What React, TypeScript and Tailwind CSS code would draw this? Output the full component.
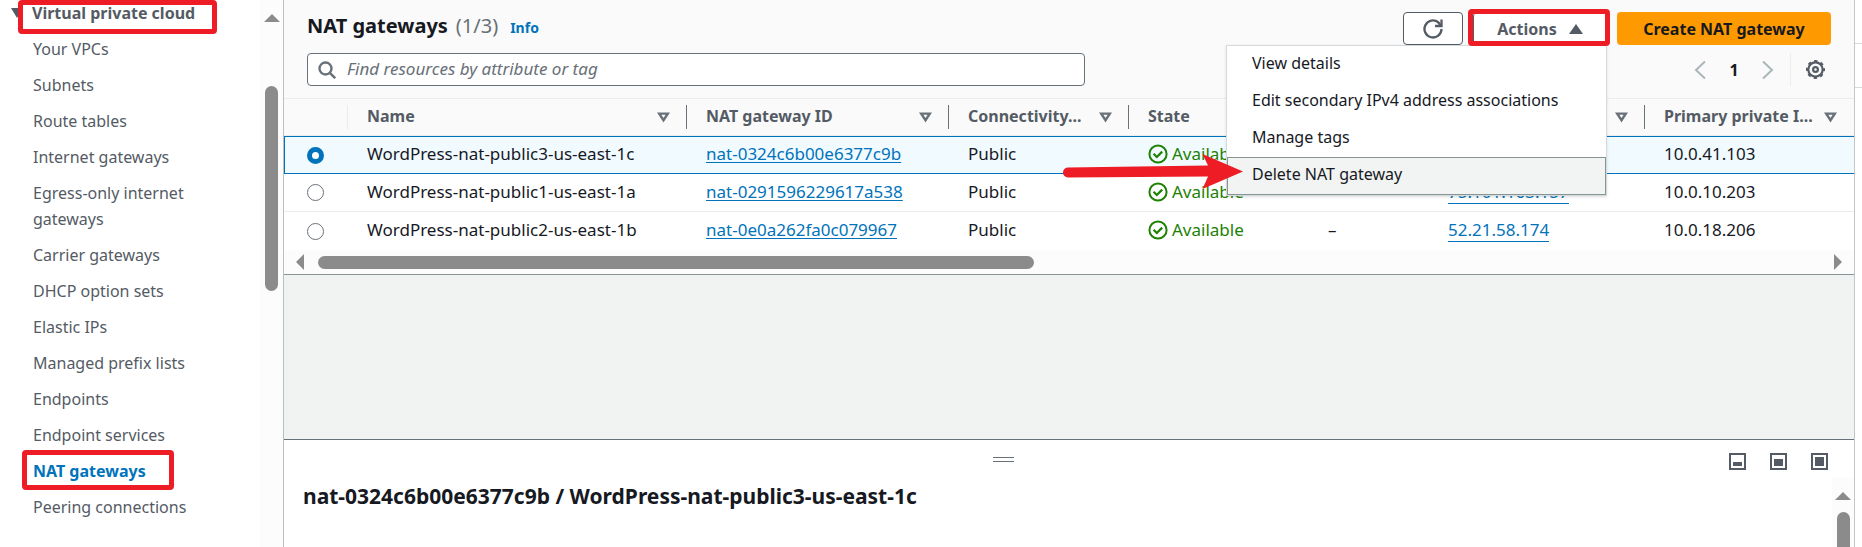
import type { ReactNode } from "react";

const navItems = [
  "Your VPCs",
  "Subnets",
  "Route tables",
  "Internet gateways",
  "Egress-only internet gateways",
  "Carrier gateways",
  "DHCP option sets",
  "Elastic IPs",
  "Managed prefix lists",
  "Endpoints",
  "Endpoint services",
  "NAT gateways",
  "Peering connections",
];

const gateways = [
  { name: "WordPress-nat-public3-us-east-1c", id: "nat-0324c6b00e6377c9b", publicIp: "", privateIp: "10.0.41.103" },
  { name: "WordPress-nat-public1-us-east-1a", id: "nat-0291596229617a538", publicIp: "75.101.163.157", privateIp: "10.0.10.203" },
  { name: "WordPress-nat-public2-us-east-1b", id: "nat-0e0a262fa0c079967", publicIp: "52.21.58.174", privateIp: "10.0.18.206" },
];

const menuItems = ["View details", "Edit secondary IPv4 address associations", "Manage tags", "Delete NAT gateway"];

function SortIcon() {
  return (
    <svg className="h-3 w-[13px] shrink-0" viewBox="0 0 13 12" fill="none" stroke="#687078" strokeWidth="2.4">
      <path d="M2.200 2.600h8.600L6.500 9.200z" />
    </svg>
  );
}

function HeaderCell({ children, sort = true, line = "border-[#687078]" }: { children?: ReactNode; sort?: boolean; line?: string }) {
  return (
    <th className="border-b border-[#eaeded] p-0 text-left font-bold text-[#545b64]">
      <div className={`flex h-6 items-center justify-between border-r pl-[19px] pr-4 ${line}`}>
        <span className="whitespace-nowrap pb-0.5">{children}</span>
        {sort && <SortIcon />}
      </div>
    </th>
  );
}

function StatusIcon() {
  return (
    <svg className="size-5 shrink-0" viewBox="0 0 20 20" fill="none" stroke="#1d8102" strokeWidth="2">
      <circle cx="10" cy="10" r="8.6" />
      <path d="M5.6 9.800l3.200 3.200 5.400-5.400" strokeWidth="2.200" />
    </svg>
  );
}

function UpTriangle() {
  return (
    <svg className="h-2 w-4" viewBox="0 0 16 8" fill="#8b8b8b">
      <path d="M8 0l8 8H0z" />
    </svg>
  );
}

function PanelIcon({ y, h }: { y: number; h: number }) {
  return (
    <svg className="size-[17px]" viewBox="0 0 17 17" fill="#545b64">
      <rect x="1" y="1" width="15" height="15" fill="none" stroke="#545b64" strokeWidth="2" />
      <rect x="4" y={y} width="9" height={h} />
    </svg>
  );
}

function Sidebar() {
  return (
    <aside className="flex w-[284px] shrink-0 border-r border-[#b9c0c0] bg-white">
      <nav className="relative flex-1 text-[16px] leading-[26px] text-[#545b64]">
        <svg className="absolute left-[11px] top-2 h-2.5 w-3" viewBox="0 0 12 10" fill="#545b64">
          <path d="M0 0h12L6 10z" />
        </svg>
        <a href="#vpc" className="block h-9 pl-8 font-bold">
          Virtual private cloud
        </a>
        <div className="absolute left-[18px] top-0 h-[34px] w-[199px] rounded-sm border-[5px] border-[#ee1c25]" />
        <ul className="flex flex-col gap-2.5 pl-[33px]">
          {navItems.map((item) => (
            <li key={item} className="relative max-w-[180px]">
              {item === "NAT gateways" ? (
                <>
                  <a href="#nat" className="font-bold text-[#0073bb]">
                    {item}
                  </a>
                  <div className="absolute -left-[11px] -top-2 h-10 w-[152px] rounded-sm border-[5px] border-[#ee1c25]" />
                </>
              ) : (
                <a href="#nav">{item}</a>
              )}
            </li>
          ))}
        </ul>
      </nav>
      <div className="flex w-[23px] flex-col items-center bg-[#fcfcfc] pt-3.5">
        <UpTriangle />
        <div className="mt-16 h-[205px] w-[13px] rounded-full bg-[#8b8b8b]" />
      </div>
    </aside>
  );
}

function Toolbar() {
  return (
    <header className="flex flex-col gap-2 border-b border-[#eaeded] bg-[#fafafa] pb-3 pl-[23px] pr-[23px] pt-3">
      <div className="flex h-[33px] items-center justify-between">
        <h1 className="flex items-baseline pb-1 text-[20px] font-bold leading-7 text-[#16191f]">
          NAT gateways
          <span className="ml-2 font-normal text-[#687078]">(1/3)</span>
          <a href="#info" className="ml-3 text-[14px] text-[#0073bb]">
            Info
          </a>
        </h1>
        <div className="flex h-full gap-2.5">
          <button aria-label="Refresh" className="flex w-[60px] items-center justify-center rounded-sm border border-[#545b64] bg-white">
            <svg className="size-5" viewBox="0 0 20 20" fill="none" stroke="#545b64" strokeWidth="2.3">
              <path d="M18.500 10A8.500 8.500 0 1 1 15.500 3.500L18 7" />
              <path d="M18.500 0.500V7H12" />
            </svg>
          </button>
          <div className="relative flex w-[134px]">
            <button className="flex w-full items-center justify-center gap-3 rounded-sm border border-[#545b64] bg-white text-[16px] font-bold text-[#545b64]">
              Actions
              <svg className="h-2.5 w-3.5" viewBox="0 0 14 10" fill="#545b64">
                <path d="M7 0l7 10H0z" />
              </svg>
            </button>
            <div className="absolute -left-[5px] -top-[3px] z-30 h-[37px] w-[142px] rounded-sm border-[5px] border-[#ee1c25]" />
            <div className="absolute right-0 top-[33px] z-20 w-[381px] border border-[#d5dbdb] bg-white text-[16px] text-[#16191f] shadow-sm">
              {menuItems.map((item) =>
                item === "Delete NAT gateway" ? (
                  <button key={item} className="block h-[38px] w-full border border-[#879596] bg-[#f2f3f3] pb-1 pl-6 text-left">
                    {item}
                  </button>
                ) : (
                  <button key={item} className="block h-[37px] w-full pb-1 pl-[25px] text-left">
                    {item}
                  </button>
                )
              )}
              <svg className="absolute -left-[165px] top-[107px] h-[37px] w-[182px]" viewBox="0 0 182 37" fill="#ee1c25">
                <path d="M6 14.500L146 12.500 140.500 1 181 18.500 140.500 36 146 23.500 6 24.500a5 5 0 0 1 0-10z" />
              </svg>
            </div>
          </div>
          <button className="w-[214px] rounded-sm bg-[#ff9900] text-[16px] font-bold text-[#16191f]">Create NAT gateway</button>
        </div>
      </div>
      <div className="flex h-[33px] items-center justify-between">
        <label className="flex h-full w-[778px] items-center gap-[11px] rounded-sm border border-[#687078] bg-white pl-2.5">
          <svg className="size-[18px]" viewBox="0 0 18 18" fill="none" stroke="#687078" strokeWidth="2.4">
            <circle cx="7.500" cy="7.500" r="6" />
            <path d="M11.800 11.800l5.400 5.400" />
          </svg>
          <input
            aria-label="Find resources"
            placeholder="Find resources by attribute or tag"
            className="h-full flex-1 bg-transparent pb-0.5 text-[17px] italic outline-none placeholder:text-[#687078]"
          />
        </label>
        <div className="flex h-full items-center">
          <button aria-label="Previous page">
            <svg className="h-5 w-3" viewBox="0 0 12 20" fill="none" stroke="#aab7b8" strokeWidth="2">
              <path d="M11 1.500L2 10l9 8.500" />
            </svg>
          </button>
          <button className="w-14 text-center text-[16px] font-bold text-[#16191f]">1</button>
          <button aria-label="Next page">
            <svg className="h-5 w-3" viewBox="0 0 12 20" fill="none" stroke="#aab7b8" strokeWidth="2">
              <path d="M1 1.500l9 8.500-9 8.500" />
            </svg>
          </button>
          <div className="ml-4 h-full border-l border-[#eaeded]" />
          <button aria-label="Preferences" className="ml-[15px] mr-1.5">
            <svg className="size-[19px]" viewBox="0 0 19 19" fill="none" stroke="#545b64">
              <circle cx="9.500" cy="9.500" r="7.200" strokeWidth="2.200" />
              <circle cx="9.500" cy="9.500" r="8.500" strokeWidth="2" strokeDasharray="3.340 3.340" strokeDashoffset="1.670" />
              <circle cx="9.500" cy="9.500" r="2.400" strokeWidth="2.200" />
            </svg>
          </button>
        </div>
      </div>
    </header>
  );
}

function GatewayTable() {
  return (
    <table className="w-full table-fixed border-separate border-spacing-0 text-[#16191f]">
      <colgroup>
        <col className="w-16" />
        <col className="w-[339px]" />
        <col className="w-[262px]" />
        <col className="w-[180px]" />
        <col className="w-[180px]" />
        <col className="w-[120px]" />
        <col className="w-[216px]" />
        <col />
      </colgroup>
      <thead className="text-[16px]">
        <tr className="h-[37px] bg-[#fafafa]">
          <HeaderCell sort={false} line="border-[#eaeded]" />
          <HeaderCell>Name</HeaderCell>
          <HeaderCell>NAT gateway ID</HeaderCell>
          <HeaderCell>Connectivity...</HeaderCell>
          <HeaderCell>State</HeaderCell>
          <HeaderCell />
          <HeaderCell />
          <HeaderCell line="border-transparent">Primary private I...</HeaderCell>
        </tr>
      </thead>
      <tbody className="text-[17px] leading-6">
        {gateways.map((g, i) => {
          const cell =
            i === 0
              ? "border-y border-[#0073bb] bg-[#f1faff] p-0 pb-0.5 pl-[19px]"
              : i === 1
                ? "border-b border-[#eaeded] bg-white p-0 pb-0.5 pl-[19px]"
                : "bg-white p-0 pb-0.5 pl-[19px]";
          return (
            <tr key={g.id} className="h-[38px]">
              <td className={i === 0 ? `${cell} border-l` : cell}>
                <input
                  type="radio"
                  name="gateway"
                  aria-label={g.name}
                  defaultChecked={i === 0}
                  className={
                    i === 0
                      ? "ml-[3px] mt-0.5 block size-[17px] appearance-none rounded-full border border-[#687078] bg-white checked:border-[5px] checked:border-[#0073bb]"
                      : "ml-1 mt-0.5 block size-[17px] appearance-none rounded-full border border-[#687078] bg-white checked:border-[5px] checked:border-[#0073bb]"
                  }
                />
              </td>
              <td className={cell}>{g.name}</td>
              <td className={cell}>
                <a href="#gateway" className="text-[#0073bb] underline underline-offset-2">
                  {g.id}
                </a>
              </td>
              <td className={cell}>Public</td>
              <td className={cell}>
                <span className="flex items-center gap-1 text-[#1d8102]">
                  <StatusIcon />
                  Available
                </span>
              </td>
              <td className={cell}>{g.publicIp && "–"}</td>
              <td className={cell}>
                {g.publicIp && (
                  <a href="#address" className="border-b border-[#0073bb] text-[#0073bb]">
                    {g.publicIp}
                  </a>
                )}
              </td>
              <td className={cell}>{g.privateIp}</td>
            </tr>
          );
        })}
      </tbody>
    </table>
  );
}

function DetailPanel() {
  return (
    <section className="flex h-[108px] border-t border-[#687078] bg-white">
      <div className="flex-1 pl-[19px] pt-10">
        <h2 className="whitespace-nowrap text-[21px] font-bold leading-8 text-[#16191f]">
          nat-0324c6b00e6377c9b / WordPress-nat-public3-us-east-1c
        </h2>
      </div>
      <div className="mr-[715px] mt-[17px] h-[5px] w-[21px] border-y border-[#687078]" />
      <div className="flex flex-col items-end">
        <div className="flex h-[38px] items-center gap-6 pr-[26px] pt-1">
          <button aria-label="Small panel">
            <PanelIcon y={9} h={4} />
          </button>
          <button aria-label="Medium panel">
            <PanelIcon y={6} h={7} />
          </button>
          <button aria-label="Large panel">
            <PanelIcon y={4} h={9} />
          </button>
        </div>
        <div className="flex w-[22px] flex-1 flex-col items-center bg-[#fcfcfc] pt-3.5">
          <UpTriangle />
          <div className="mt-3 w-[13px] flex-1 rounded-t-full bg-[#8b8b8b]" />
        </div>
      </div>
    </section>
  );
}

export default function App() {
  return (
    <div className="flex min-h-screen overflow-hidden bg-white font-['Noto_Sans',sans-serif]">
      <Sidebar />
      <main className="flex min-w-0 flex-1 flex-col bg-[#f1f3f3]">
        <Toolbar />
        <GatewayTable />
        <div className="flex h-[25px] items-center border-b border-[#879596] bg-[#fcfcfc] px-3">
          <svg className="h-4 w-2" viewBox="0 0 8 16" fill="#8b8b8b">
            <path d="M8 0v16L0 8z" />
          </svg>
          <div className="ml-3.5 h-[13px] w-[716px] rounded-full bg-[#8b8b8b]" />
          <svg className="ml-auto h-4 w-2" viewBox="0 0 8 16" fill="#8b8b8b">
            <path d="M0 0v16l8-8z" />
          </svg>
        </div>
        <div className="flex-1" />
        <DetailPanel />
      </main>
      <div className="w-2 shrink-0 border-l border-[#c3c9c9] pt-[43px]">
        <div className="h-[45px] border-y border-[#d5dbdb]" />
      </div>
    </div>
  );
}
